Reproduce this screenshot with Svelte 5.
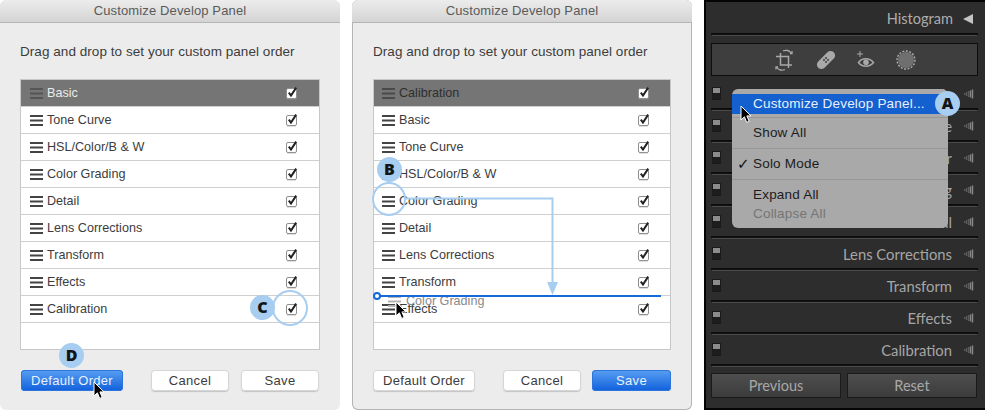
<script>
	const leftRows = ['Basic', 'Tone Curve', 'HSL/Color/B & W', 'Color Grading', 'Detail', 'Lens Corrections', 'Transform', 'Effects', 'Calibration'];
	const rightRows = ['Calibration', 'Basic', 'Tone Curve', 'HSL/Color/B & W', 'Color Grading', 'Detail', 'Lens Corrections', 'Transform', 'Effects'];
	const panels = ['Basic', 'Tone Curve', 'HSL / Color', 'Color Grading', 'Detail', 'Lens Corrections', 'Transform', 'Effects', 'Calibration'];
	const wedge = [0, 2, 4, 6, 8];
</script>

{#snippet burger()}
	<svg class="burger" width="13" height="11" viewBox="0 0 13 11"><path d="M0 1h13M0 5.500h13M0 10h13" stroke="currentColor" stroke-width="2" /></svg>
{/snippet}

{#snippet checkbox()}
	<svg class="check" width="12" height="14" viewBox="0 0 12 14">
		<rect x="0.500" y="2.500" width="10" height="10" rx="1.500" fill="#fff" stroke="#8f8f8f" />
		<path d="M1 13h9" stroke="#9a9a9a" opacity="0.6" />
		<path d="M2.800 6.600 5 9.600 10.200 1.600" fill="none" stroke="#222" stroke-width="2" />
	</svg>
{/snippet}

{#snippet list(rows)}
	<div class="list">
		{#each rows as name, i}
			<div class="row" class:selected={i === 0}>
				{@render burger()}
				<span class="name">{name}</span>
				{@render checkbox()}
			</div>
		{/each}
		<div class="row empty"></div>
	</div>
{/snippet}

{#snippet cursor()}
	<svg class="cursor" width="13" height="19" viewBox="0 0 13 19">
		<path d="M1 1v14l3.400-3.200 2.300 5.600 2.500-1-2.300-5.500H11z" fill="#000" stroke="#fff" stroke-width="1" />
	</svg>
{/snippet}

<div class="page">
	<section class="dialog first">
		<header>Customize Develop Panel</header>
		<div class="body">
			<p>Drag and drop to set your custom panel order</p>
			{@render list(leftRows)}
			<div class="buttons">
				<button class="wide primary">Default Order</button>
				<button class="cancel">Cancel</button>
				<button class="save">Save</button>
			</div>
		</div>
		<svg class="marks" width="340" height="410">
			<circle cx="290" cy="308" r="17" fill="none" stroke="#a7cdf0" stroke-width="2" />
		</svg>
		<span class="badge" style="left:250px;top:295px">C</span>
		<span class="badge" style="left:59px;top:343px">D</span>
		<div class="pointer" style="left:93px;top:381px">{@render cursor()}</div>
	</section>

	<section class="dialog second">
		<header>Customize Develop Panel</header>
		<div class="body">
			<p>Drag and drop to set your custom panel order</p>
			{@render list(rightRows)}
			<div class="buttons">
				<button class="wide">Default Order</button>
				<button class="cancel">Cancel</button>
				<button class="save primary">Save</button>
			</div>
		</div>
		<div class="ghost">
			{@render burger()}
			<span>Color Grading</span>
		</div>
		<svg class="marks" width="340" height="410">
			<circle cx="37" cy="199" r="16" fill="none" stroke="#a7cdf0" stroke-width="2" />
			<path d="M54 198.500H200.500V286" fill="none" stroke="#a7cdf0" stroke-width="2" />
			<path d="M195 282h11l-5.500 13z" fill="#a7cdf0" />
			<path d="M28 296H309" stroke="#1469dc" stroke-width="2" />
			<circle cx="25" cy="296" r="3" fill="#fff" stroke="#1469dc" stroke-width="2" />
		</svg>
		<span class="badge" style="left:25px;top:157px">B</span>
		<div class="pointer" style="left:43px;top:301px">{@render cursor()}</div>
	</section>

	<section class="develop">
		<div class="histogram">
			<span>Histogram</span>
			<svg width="10" height="10" viewBox="0 0 10 10"><path d="M0 5 10 0v10z" fill="#c4c4c4" /></svg>
		</div>
		<div class="rule"></div>
		<div class="tools">
			<svg width="22" height="24" viewBox="0 0 22 24" fill="none" stroke="#a8a8a8" stroke-width="1.500">
				<path d="M7.500 5v12H19M3 8.500h12.500V20" />
				<path d="M10 3c3-1.500 6.500-.5 8 2M17 5.500h2V3M12 21.500c-3 1.500-6.500.5-8-2M5 19H3v2.500" stroke-width="1.300" />
			</svg>
			<svg width="20" height="20" viewBox="0 0 20 20">
				<rect x="-1" y="5.500" width="22" height="9" rx="4.500" fill="#a8a8a8" transform="rotate(-45 10 10)" />
				<g fill="#3f3f3f"><circle cx="8" cy="10" r="1" /><circle cx="10" cy="8" r="1" /><circle cx="12" cy="10" r="1" /><circle cx="10" cy="12" r="1" /></g>
			</svg>
			<svg width="18" height="18" viewBox="0 0 18 18" fill="none" stroke="#a8a8a8">
				<path d="M3 0v6M0 3h6" stroke-width="1" />
				<path d="M1.500 11.500c3.500-5 11-5 15 0-4 5-11.500 5-15 0z" stroke-width="1.500" />
				<circle cx="9" cy="11.200" r="2.800" fill="#a8a8a8" stroke="none" />
			</svg>
			<svg width="20" height="20" viewBox="0 0 20 20">
				<circle cx="10" cy="10" r="8" fill="#6f6f6f" />
				<circle cx="10" cy="10" r="9" fill="none" stroke="#b0b0b0" stroke-width="1.300" stroke-dasharray="2 1.500" />
			</svg>
		</div>
		{#each panels as name}
			<div class="panel-row">
				<span class="switch"></span>
				<span class="panel-name">{name}</span>
				<svg class="wedge" width="10" height="10" viewBox="0 0 10 10">
					{#each wedge as x, i}
						<path d="M{x + 0.5} {4.500 - i}v{2 * i + 1}" stroke="#8a8a8a" stroke-width="1.400" stroke-dasharray={i < 3 ? '1 1' : 'none'} />
					{/each}
				</svg>
			</div>
			<div class="rule"></div>
		{/each}
		<div class="nav">
			<button>Previous</button>
			<button>Reset</button>
		</div>

		<div class="menu">
			<div class="item active">Customize Develop Panel...</div>
			<hr />
			<div class="item">Show All</div>
			<hr />
			<div class="item"><span class="tick">✓</span>Solo Mode</div>
			<hr />
			<div class="item">Expand All</div>
			<div class="item off">Collapse All</div>
		</div>
		<span class="badge" style="left:229px;top:89px">A</span>
		<div class="pointer" style="left:34px;top:103px">{@render cursor()}</div>
	</section>
</div>

<style>
	:global(body) {
		margin: 0;
		background: #fff;
	}

	.page {
		display: flex;
		width: 985px;
		height: 410px;
		overflow: hidden;
		font-family: 'Liberation Sans', Arial, sans-serif;
	}

	.dialog {
		position: relative;
		box-sizing: border-box;
		width: 340px;
		height: 410px;
		background: #ececec;
		border-radius: 6px;
		color: #3c3c3c;
		flex: none;
	}
	.first {
		margin-right: 12px;
	}
	.second {
		margin-right: 12px;
		box-shadow: inset 0 0 0 1px #b4b4b4;
	}

	header {
		box-sizing: border-box;
		height: 23px;
		line-height: 22px;
		text-align: center;
		font-size: 13px;
		letter-spacing: 0.13px;
		color: #5a5a5a;
		background: linear-gradient(#ececec, #d4d4d4);
		border-bottom: 1px solid #b4b4b4;
		border-radius: 6px 6px 0 0;
	}

	.body {
		padding: 21px 20px 0;
	}
	.second .body {
		padding: 21px 21px 0 21px;
	}

	p {
		margin: 0 0 19px;
		height: 16px;
		line-height: 16px;
		font-size: 13.5px;
		letter-spacing: 0.05px;
	}

	.list {
		border: 1px solid #c8c8c8;
		border-bottom: 0;
		background: #fff;
	}

	.row {
		box-sizing: border-box;
		display: flex;
		align-items: center;
		height: 27px;
		padding: 0 21px 0 9px;
		border-bottom: 1px solid #cfcfcf;
		font-size: 12.6px;
		color: #3c3c3c;
	}
	.second .row {
		padding: 0 20px 0 8px;
	}
	.row.empty {
		border-bottom: 1px solid #c8c8c8;
	}
	.row.selected {
		background: #757575;
		color: #ececec;
	}
	.second .row.selected {
		color: #2e2e2e;
	}
	.selected .burger {
		color: #555;
	}
	.second .selected .burger {
		color: #4a4a4a;
	}

	.burger {
		flex: none;
		margin-right: 4px;
		color: #444;
	}
	.name {
		flex: 1;
	}
	.check {
		flex: none;
	}

	.buttons {
		display: flex;
		margin-top: 20px;
		padding-left: 1px;
	}
	.second .buttons {
		padding-left: 0;
	}
	.buttons button {
		box-sizing: border-box;
		height: 21px;
		padding: 0;
		background: #fff;
		border: 0;
		border-radius: 4px;
		box-shadow: inset 0 0 0 1px #d6d6d6, 0 1px 1px #c4c4c4;
		font: 13px 'Liberation Sans', Arial, sans-serif;
		letter-spacing: 0.3px;
		color: #3c3c3c;
	}
	.buttons .wide {
		width: 102px;
		margin-right: 28px;
	}
	.buttons .cancel {
		width: 78px;
		margin-right: 12px;
	}
	.buttons .save {
		width: 78px;
	}
	.second .buttons .cancel {
		margin-right: 11px;
	}
	.second .buttons .save {
		width: 79px;
	}
	.buttons .primary {
		background: linear-gradient(#5a9ff2, #0f60dc);
		box-shadow: inset 0 0 0 1px #2d74dc;
		color: #e9f1fc;
	}

	.marks {
		position: absolute;
		left: 0;
		top: 0;
		pointer-events: none;
	}

	.badge {
		position: absolute;
		width: 25px;
		height: 25px;
		border-radius: 50%;
		background: #a7cdf0;
		text-align: center;
		font: 800 16px/25px 'Open Sans', sans-serif;
		color: #141414;
	}

	.pointer {
		position: absolute;
		line-height: 0;
	}

	.ghost {
		position: absolute;
		left: 36px;
		top: 294px;
		display: flex;
		align-items: center;
		gap: 1px;
		font-size: 12.6px;
		color: #8a8a8a;
	}
	.ghost .burger {
		color: #b4b4b4;
	}

	.develop {
		position: relative;
		box-sizing: border-box;
		width: 281px;
		height: 410px;
		flex: none;
		padding: 0 7px 0 5px;
		background: #2d2d2d;
		border: 1px solid #050505;
		border-width: 2px 0 2px 2px;
		font-family: Lato, 'Open Sans', sans-serif;
		color: #a6a6a6;
	}

	.histogram {
		box-sizing: border-box;
		display: flex;
		align-items: center;
		justify-content: flex-end;
		gap: 10px;
		height: 31px;
		padding: 2px 5px 0 0;
		font-size: 14.6px;
		color: #acacac;
	}

	.rule {
		height: 1px;
		border: 1px solid #0c0c0c;
		border-bottom-color: #4a4a4a;
		background: #111;
		border-radius: 1px;
	}

	.tools {
		box-sizing: border-box;
		display: flex;
		align-items: center;
		gap: 21px;
		height: 33px;
		margin: 7px 0 3px;
		padding-left: 61px;
		background: #3e3e3e;
		border: 1px solid #0d0d0d;
	}

	.panel-row {
		display: flex;
		align-items: center;
		height: 29px;
		padding-left: 1px;
	}
	.switch {
		box-sizing: border-box;
		width: 9px;
		height: 13px;
		background: linear-gradient(#8c8c8c 0 45%, #1d1d1d 45%);
		border: 1px solid #1a1a1a;
		flex: none;
	}
	.panel-name {
		flex: 1;
		text-align: right;
		font-size: 14.8px;
		margin-right: 12px;
	}
	.wedge {
		flex: none;
		margin-right: 4px;
	}

	.nav {
		display: flex;
		gap: 6px;
		margin: 6px 1px 0 0;
	}
	.nav button {
		flex: 1;
		height: 25px;
		padding: 0;
		background: linear-gradient(#4e4e4e, #3c3c3c);
		border: 1px solid #1a1a1a;
		font: 14.5px Lato, 'Open Sans', sans-serif;
		color: #a8a8a8;
	}

	.menu {
		position: absolute;
		left: 26px;
		top: 87px;
		box-sizing: border-box;
		width: 216px;
		height: 139px;
		padding-top: 5px;
		background: #a9a9a9;
		border-radius: 6px;
		font: 13.5px 'Liberation Sans', Arial, sans-serif;
		letter-spacing: 0.2px;
		color: #1c1c1c;
	}
	.item {
		height: 20px;
		line-height: 20px;
		padding-left: 21px;
		position: relative;
	}
	.item.active {
		background: #1460cf;
		color: #e8f0fb;
	}
	.item.off {
		height: 19px;
		line-height: 17px;
		color: #757575;
	}
	.tick {
		position: absolute;
		left: 5px;
		font: 700 15px/20px 'DejaVu Sans', sans-serif;
		color: #111;
	}
	hr {
		margin: 5px 0;
		border: 0;
		height: 1px;
		background: #979797;
	}
	.active + hr {
		margin-top: 3px;
	}
</style>
